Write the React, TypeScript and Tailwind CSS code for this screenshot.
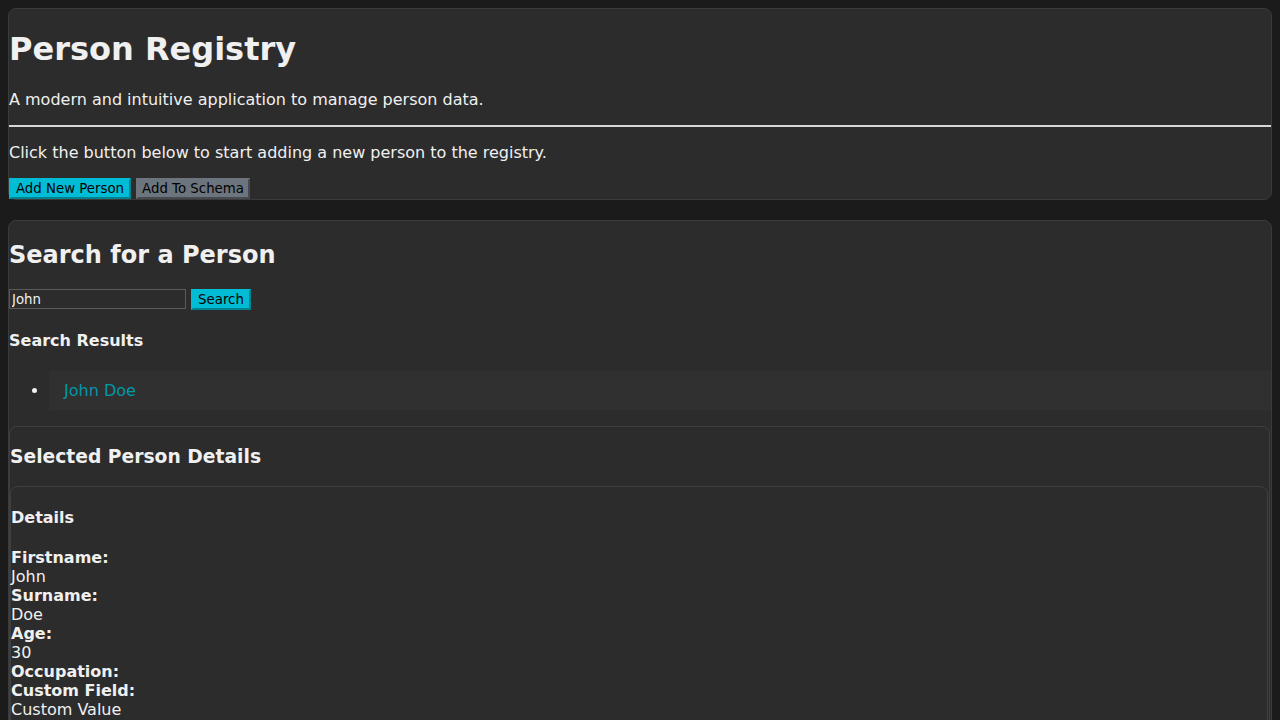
import { useState } from 'react';

type Person = {
  firstname: string;
  surname: string;
  age: string;
  occupation: string;
  customField: string;
};

const people: Person[] = [
  { firstname: 'John', surname: 'Doe', age: '30', occupation: '', customField: 'Custom Value' },
];

function Field({ label, value }: { label: string; value: string }) {
  return (
    <div>
      <strong className="block font-bold">{label}:</strong>
      {value && <div>{value}</div>}
    </div>
  );
}

export default function App() {
  const [query, setQuery] = useState('John');
  const [selected, setSelected] = useState<Person | null>(people[0]);
  const results = people.filter((p) =>
    `${p.firstname} ${p.surname}`.toLowerCase().includes(query.toLowerCase()),
  );

  return (
    <div className="min-h-screen bg-[#1b1b1b] p-2 font-['DejaVu_Sans',sans-serif] text-[16px] leading-[normal] text-[#f0f0f0]">
      <section className="mb-5 rounded-lg border border-[#3b3b3b] bg-[#2c2c2c]">
        <h1 className="my-[21.44px] text-[32px] font-bold leading-[normal]">Person Registry</h1>
        <p className="my-4">A modern and intuitive application to manage person data.</p>
        <hr className="my-2 border-t-2 border-[#d8d8d8]" />
        <p className="my-4">Click the button below to start adding a new person to the registry.</p>
        <div className="flex gap-[5px]">
          <button
            type="button"
            className="w-[122px] border-2 border-t-[#00bcd4] border-l-[#00bcd4] border-b-[#00838f] border-r-[#00838f] bg-[#00bcd4] py-px text-[13.33px] leading-[normal] text-black"
          >
            Add New Person
          </button>
          <button
            type="button"
            className="w-[114px] border-2 border-t-[#6c757d] border-l-[#6c757d] border-b-[#454b50] border-r-[#454b50] bg-[#6c757d] py-px text-[13.33px] leading-[normal] text-black"
          >
            Add To Schema
          </button>
        </div>
      </section>

      <section className="rounded-lg border border-[#3b3b3b] bg-[#2c2c2c]">
        <h2 className="my-[19.92px] text-[24px] font-bold leading-[normal]">Search for a Person</h2>
        <div className="flex items-center gap-[5px]">
          <input
            value={query}
            onChange={(e) => setQuery(e.target.value)}
            className="h-[20px] w-[177px] border border-[#5a5a5a] bg-[#2c2c2c] px-[2px] text-[13.33px] text-[#f0f0f0] outline-none"
          />
          <button
            type="button"
            className="w-[60px] border-2 border-t-[#00bcd4] border-l-[#00bcd4] border-b-[#00838f] border-r-[#00838f] bg-[#00bcd4] py-px text-[13.33px] leading-[normal] text-black"
          >
            Search
          </button>
        </div>
        <h4 className="my-[21.28px] font-bold">Search Results</h4>
        <ul className="my-4 list-disc pl-10">
          {results.map((p) => (
            <li
              key={p.firstname + p.surname}
              onClick={() => setSelected(p)}
              className="cursor-pointer bg-[#303030] px-[15px] py-[10px] text-[#0097a7] marker:text-[#f0f0f0]"
            >
              {p.firstname} {p.surname}
            </li>
          ))}
        </ul>

        {selected && (
          <div className="mb-4 mr-px rounded-lg border border-[#3f3f3f] bg-[#2c2c2c]">
            <h3 className="my-[18.72px] text-[18.72px] font-bold leading-[normal]">Selected Person Details</h3>
            <div className="mr-px rounded-lg border border-[#3f3f3f] bg-[#2c2c2c]">
              <h4 className="my-[21.28px] font-bold">Details</h4>
              <Field label="Firstname" value={selected.firstname} />
              <Field label="Surname" value={selected.surname} />
              <Field label="Age" value={selected.age} />
              <Field label="Occupation" value={selected.occupation} />
              <Field label="Custom Field" value={selected.customField} />
              <div className="h-4" />
            </div>
          </div>
        )}
      </section>
    </div>
  );
}
